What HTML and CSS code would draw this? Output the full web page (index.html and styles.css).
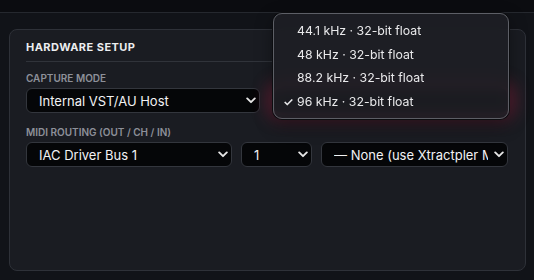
FILE: index.html
```html
<!doctype html>
<html>
<head>
  <meta charset="utf-8">
  <meta name="viewport" content="width=device-width, initial-scale=1">
  <title>Hardware Setup</title>
  <link rel="stylesheet" href="styles.css">
</head>
<body>

  <div class="topbar"></div>

  <div class="page">
    <section class="panel">
      <h2 class="panel-title">Hardware Setup</h2>

      <div class="row row-two">
        <div class="field">
          <label class="label">Capture Mode</label>
          <div class="select">
            <span class="select-value">Internal VST/AU Host</span>
            <svg class="chev" width="10" height="7" viewBox="0 0 10 7"><path d="M1.2 1.4 L5 5.2 L8.8 1.4" fill="none" stroke="#e6e6e6" stroke-width="1.9" stroke-linecap="round" stroke-linejoin="round"/></svg>
          </div>
        </div>
        <div class="field">
          <!-- label + value sit under the open menu -->
          <label class="label">&nbsp;</label>
          <div class="select is-focused"></div>
        </div>
      </div>

      <div class="field">
        <label class="label">MIDI Routing (Out / Ch / In)</label>
        <div class="row row-three">
          <div class="select">
            <span class="select-value">IAC Driver Bus 1</span>
            <svg class="chev" width="10" height="7" viewBox="0 0 10 7"><path d="M1.2 1.4 L5 5.2 L8.8 1.4" fill="none" stroke="#e6e6e6" stroke-width="1.9" stroke-linecap="round" stroke-linejoin="round"/></svg>
          </div>
          <div class="select">
            <span class="select-value">1</span>
            <svg class="chev" width="10" height="7" viewBox="0 0 10 7"><path d="M1.2 1.4 L5 5.2 L8.8 1.4" fill="none" stroke="#e6e6e6" stroke-width="1.9" stroke-linecap="round" stroke-linejoin="round"/></svg>
          </div>
          <div class="select">
            <span class="select-value value-long">— None (use Xtractpler MIDI)</span>
            <svg class="chev" width="10" height="7" viewBox="0 0 10 7"><path d="M1.2 1.4 L5 5.2 L8.8 1.4" fill="none" stroke="#e6e6e6" stroke-width="1.9" stroke-linecap="round" stroke-linejoin="round"/></svg>
          </div>
        </div>
      </div>
    </section>
  </div>

  <!-- open native-style menu for the sample rate select -->
  <ul class="menu">
    <li class="menu-item">44.1 kHz · 32-bit float</li>
    <li class="menu-item">48 kHz · 32-bit float</li>
    <li class="menu-item">88.2 kHz · 32-bit float</li>
    <li class="menu-item is-checked"><span class="check">✓</span>96 kHz · 32-bit float</li>
  </ul>

</body>
</html>
```

FILE: styles.css
```css
html, body {
  margin: 0;
  height: 100%;
}

body {
  background: #111318;
  color: #e8e8ea;
  font-family: Inter, "Noto Sans", sans-serif;
  position: relative;
  overflow: hidden;
}

.topbar {
  height: 12px;
  background: #0b0c10;
  border-bottom: 1px solid #25282e;
}

.page {
  padding: 16px 8px 8px 9px;
}

.panel {
  background: #1a1c22;
  border: 1px solid #2e3138;
  border-radius: 8px;
  padding: 9px 17px 0 16px;
  height: 242px;
  box-sizing: border-box;
}

.panel-title {
  margin: 0;
  font-size: 11px;
  font-weight: 700;
  letter-spacing: 0.45px;
  line-height: 13px;
  text-transform: uppercase;
  color: #eceef0;
  padding: 2px 0 7px;
  border-bottom: 1px solid #30333a;
}

.row {
  display: grid;
  gap: 14px;
}

.row-two {
  grid-template-columns: minmax(0, 1fr) minmax(0, 1fr);
  margin-top: 10px;
  margin-bottom: 13px;
}

.row-three {
  grid-template-columns: minmax(0, 206fr) minmax(0, 71fr) minmax(0, 187fr);
  gap: 9px;
}

.label {
  display: block;
  font-size: 10px;
  font-weight: 600;
  text-transform: uppercase;
  color: #8d9099;
  margin-bottom: 4px;
  line-height: 12px;
}

.select {
  display: flex;
  align-items: center;
  box-sizing: border-box;
  height: 25px;
  min-width: 0;
  background: #050608;
  border: 1px solid #33363d;
  border-radius: 6px;
  padding: 0 3px 0 12px;
  font-size: 13px;
  color: #f2f2f4;
}

.select-value {
  flex: 1;
  min-width: 0;
  overflow: hidden;
  white-space: nowrap;
  margin-right: 17px;
}

.value-long {
  margin-right: 6px;
}

.chev {
  flex: none;
}

.is-focused {
  border-color: #6a2a3c;
  box-shadow: 0 0 0 2px rgba(190, 40, 80, 0.45), 0 0 16px 7px rgba(180, 35, 75, 0.42);
}

.menu {
  position: absolute;
  left: 273px;
  top: 13px;
  width: 234px;
  margin: 0;
  padding: 5px 0;
  list-style: none;
  background: rgba(30, 31, 36, 0.88);
  backdrop-filter: blur(6px);
  border: 1px solid #5d5f66;
  border-radius: 9px;
  box-shadow: 0 0 0 1px #0c0d10, 0 6px 18px rgba(0, 0, 0, 0.4);
}

.menu-item {
  position: relative;
  height: 23.5px;
  line-height: 23.5px;
  padding-left: 23px;
  font-size: 12.3px;
  color: #e9e9eb;
}

.check {
  position: absolute;
  left: 9px;
  font-size: 12px;
  font-weight: 600;
}
```
